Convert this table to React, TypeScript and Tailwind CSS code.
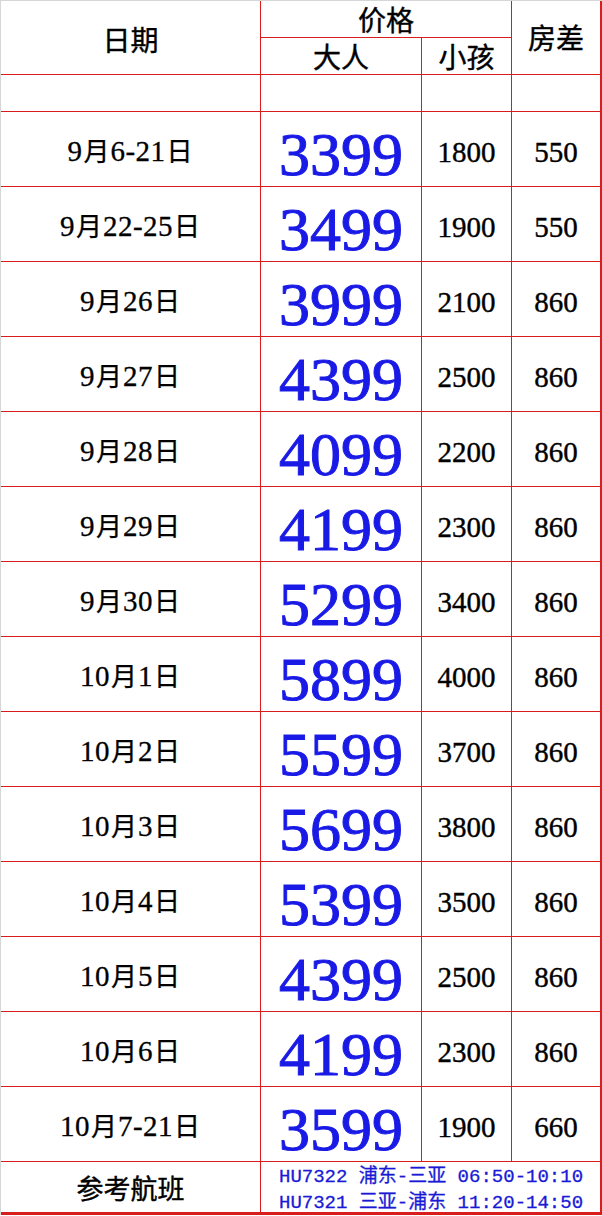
import React from "react";

const rows: [string, string, string, string][] = [
  ["9月6-21日", "3399", "1800", "550"],
  ["9月22-25日", "3499", "1900", "550"],
  ["9月26日", "3999", "2100", "860"],
  ["9月27日", "4399", "2500", "860"],
  ["9月28日", "4099", "2200", "860"],
  ["9月29日", "4199", "2300", "860"],
  ["9月30日", "5299", "3400", "860"],
  ["10月1日", "5899", "4000", "860"],
  ["10月2日", "5599", "3700", "860"],
  ["10月3日", "5699", "3800", "860"],
  ["10月4日", "5399", "3500", "860"],
  ["10月5日", "4399", "2500", "860"],
  ["10月6日", "4199", "2300", "860"],
  ["10月7-21日", "3599", "1900", "660"],
];

const serif = { fontFamily: '"Liberation Serif", "Noto Sans CJK SC", serif' };

function DateText({ text }: { text: string }) {
  const parts = text.split(/([月日])/).filter(Boolean);
  return (
    <span className="flex items-baseline [-webkit-text-stroke:0.3px_black]">
      {parts.map((p, i) =>
        p === "月" || p === "日" ? (
          <span key={i} className="text-[26px] px-[1px]">
            {p}
          </span>
        ) : (
          <span key={i} className="text-[29px] tracking-[0.5px]">
            {p}
          </span>
        )
      )}
    </span>
  );
}

export default function App() {
  return (
    <div className="w-[602px] h-[1216px] bg-white" style={serif}>
      <div className="border-t border-l border-[#d6d6d6] w-[602px]">
        <div className="grid grid-cols-[259px_160px_89px_88px] gap-px bg-[#d91c1c] border-r-2 border-b-[3px] border-[#d91c1c] text-black">
          <div className="row-span-2 bg-white flex items-center justify-center pt-[8px] text-[28px] leading-none [-webkit-text-stroke:0.4px_black]">日期</div>
          <div className="col-span-2 h-[36px] bg-white flex items-center justify-center pt-[6px] text-[28px] leading-none [-webkit-text-stroke:0.4px_black]">价格</div>
          <div className="row-span-2 bg-white flex items-center justify-center pt-[4px] text-[28px] leading-none [-webkit-text-stroke:0.4px_black]">房差</div>
          <div className="h-[36px] bg-white flex items-center justify-center pt-[6px] text-[28px] leading-none [-webkit-text-stroke:0.4px_black]">大人</div>
          <div className="h-[36px] bg-white flex items-center justify-center pt-[6px] text-[28px] leading-none [-webkit-text-stroke:0.4px_black]">小孩</div>

          <div className="h-[36px] bg-white" />
          <div className="h-[36px] bg-white" />
          <div className="h-[36px] bg-white" />
          <div className="h-[36px] bg-white" />

          {rows.map(([d, a, c, r]) => (
            <React.Fragment key={d}>
              <div className="h-[74px] bg-white flex items-center justify-center pt-[5px] leading-none">
                <DateText text={d} />
              </div>
              <div className="h-[74px] bg-white flex items-center justify-center pt-[9px] text-[62px] leading-none text-[#1a1ae6] [-webkit-text-stroke:1px_#1a1ae6]">{a}</div>
              <div className="h-[74px] bg-white flex items-center justify-center pt-[6px] text-[29px] leading-none [-webkit-text-stroke:0.4px_black]">{c}</div>
              <div className="h-[74px] bg-white flex items-center justify-center pt-[6px] text-[29px] leading-none [-webkit-text-stroke:0.4px_black]">{r}</div>
            </React.Fragment>
          ))}

          <div className="h-[50px] bg-white flex items-center justify-center pt-[7px] text-[27px] leading-none [-webkit-text-stroke:0.4px_black]">参考航班</div>
          <div
            className="col-span-3 h-[50px] bg-white flex flex-col justify-center pl-[18px] pt-[6px] text-[19px] leading-[26px] text-[#1a1ad6] [-webkit-text-stroke:0.3px_#1a1ad6]"
            style={{ fontFamily: '"Liberation Mono", "Noto Sans CJK SC", monospace' }}
          >
            <div className="whitespace-pre">HU7322 浦东-三亚 06:50-10:10</div>
            <div className="whitespace-pre">HU7321 三亚-浦东 11:20-14:50</div>
          </div>
        </div>
      </div>
    </div>
  );
}
